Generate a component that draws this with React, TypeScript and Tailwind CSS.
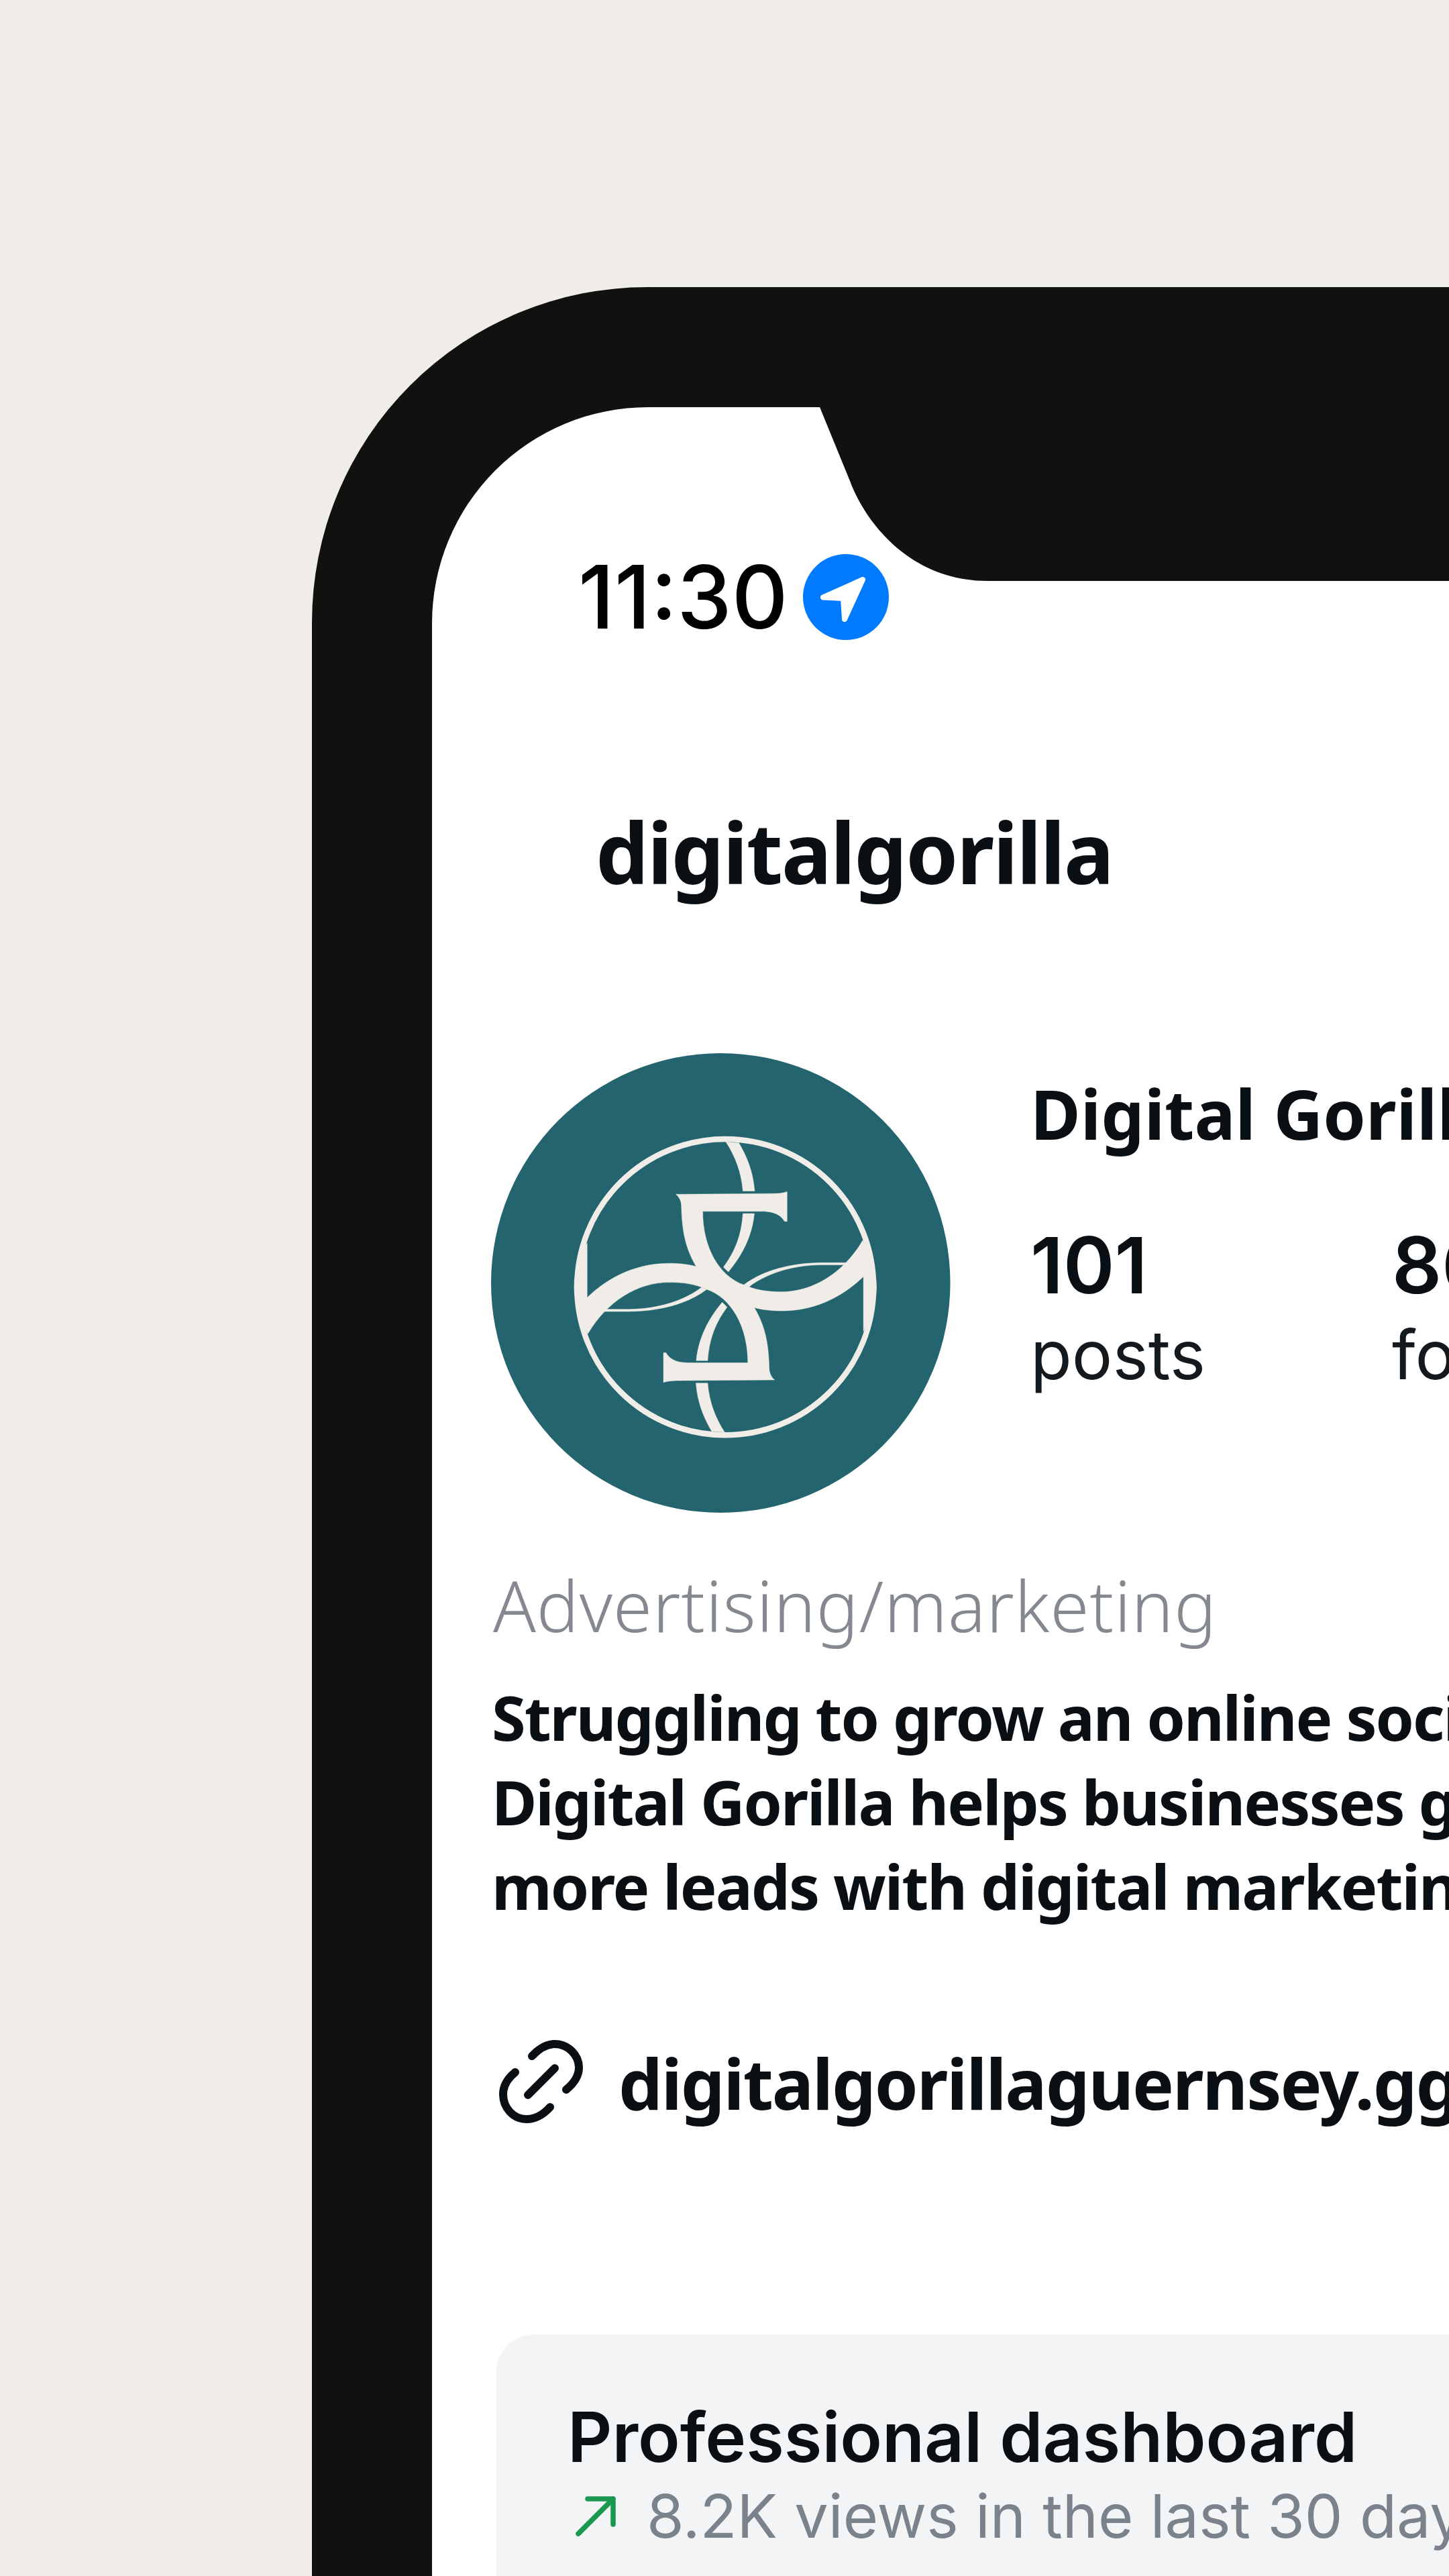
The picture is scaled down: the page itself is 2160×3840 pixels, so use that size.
const plex = "font-['Noto_Sans',sans-serif]";
const inter = "font-['Inter',sans-serif]";

const cream = "#f0ede8";

// one half of the monogram, drawn again turned 180deg round the ring centre
const logoPaths = [
  "M668 510 L980 508 Q1010 508 1028 502 L1028 596 L1020 596 C1005 570 975 564 945 564 L755 564 C755 680 810 770 888 796 C925 812 960 818 1010 818 C1110 818 1210 760 1273 655 C1300 715 1317 760 1317 803 C1317 850 1300 900 1275 942 L1275 770 C1200 840 1110 878 1010 878 C975 878 950 875 922 868 L735 740 C705 690 688 640 686 550 C686 530 678 518 668 510 Z",
  "M888 796 C950 750 1040 727 1140 726 L1228 726 L1222 733 L1140 733 C1050 733 960 760 905 802 Z",
  "M830 345 C860 390 880 440 885 500 L923 500 C918 440 900 395 872 348 Z",
  "M885 571 L922 571 C915 640 885 700 838 755 L822 740 C860 690 880 640 885 571 Z",
];

function Avatar() {
  return (
    <svg viewBox="70 65 1487 1450" preserveAspectRatio="none" className="h-[685px] w-[685px] shrink-0">
      <ellipse cx="813" cy="790" rx="743" ry="725" fill="#23646e" />
      <ellipse cx="828" cy="803" rx="480" ry="467" fill="none" stroke={cream} strokeWidth="18" />
      <g fill={cream} stroke={cream} strokeWidth="1">
        {logoPaths.map((d) => (
          <path key={d} d={d} />
        ))}
        {logoPaths.map((d) => (
          <path key={d} d={d} transform="rotate(180 828 803)" />
        ))}
      </g>
    </svg>
  );
}

function LocationDot() {
  return (
    <svg viewBox="0 0 128 128" className="h-[128px] w-[128px] shrink-0">
      <circle cx="64" cy="64" r="64" fill="#007aff" />
      <path
        d="M89 38 L30 64.5 L60 66 L62 97 Z"
        fill="#fff"
        stroke="#fff"
        strokeWidth="8"
        strokeLinejoin="round"
      />
    </svg>
  );
}

function LinkIcon() {
  return (
    <svg viewBox="0 0 145 145" fill="none" stroke="#0a0f14" strokeWidth="12" strokeLinecap="round" className="h-[145px] w-[145px] shrink-0">
      <path d="M58 33 C68 22 78 16 90 15 C112 14 128 32 128 50 C128 63 120 74 109 83" />
      <path d="M85 109 C75 120 63 127 50 127 C30 127 15 110 15 90 C15 77 22 66 33 57" />
      <path d="M52 91 L92 51" />
    </svg>
  );
}

function Stat({ value, label }: { value: string; label: string }) {
  return (
    <div className="flex w-[539px] shrink-0 flex-col">
      <span className={`${inter} text-[116px] leading-[124px] font-semibold text-[#0a0f14]`}>{value}</span>
      <span className={`${inter} mt-[15px] text-[101px] leading-[112px] text-[#14191e]`}>{label}</span>
    </div>
  );
}

export default function App() {
  return (
    <div className="h-[3840px] w-[2160px] overflow-hidden bg-[#f0ede8] pt-[428px] pl-[465px]">
      <div className="h-[3412px] w-[2400px] rounded-tl-[500px] bg-[#11110f] pt-[179px] pl-[179px]">
        <div className="relative h-[3233px] w-[2221px] overflow-hidden rounded-tl-[322px] bg-white">
          {/* notch */}
          <svg viewBox="0 0 1643 259" className="absolute top-0 left-[578px] h-[259px] w-[1643px]">
            <path d="M0 0 L45 110 C65 165 130 259 250 259 L1643 259 L1643 0 Z" fill="#11110f" />
          </svg>

          <div className="flex h-[566px] items-center pl-[218px]">
            <span className={`${inter} w-[335px] text-[130px] leading-none font-[550] text-black`}>11:30</span>
            <LocationDot />
          </div>

          <h1 className={`${plex} mt-[17px] ml-[244px] text-[125px] leading-[160px] font-bold tracking-[-2px] text-[#0a0f14]`}>
            digitalgorilla
          </h1>

          <div className="mt-[220px] flex items-start pl-[88px]">
            <Avatar />
            <div className="ml-[119px] flex flex-col pt-[25px]">
              <span className={`${plex} text-[102px] leading-[130px] font-bold whitespace-nowrap text-[#0a0f14]`}>
                Digital Gorilla
              </span>
              <div className="mt-[99px] flex">
                <Stat value="101" label="posts" />
                <Stat value="860" label="followers" />
              </div>
            </div>
          </div>

          <p className={`${plex} mt-[73px] ml-[91px] text-[105px] leading-[130px] font-light tracking-[1px] text-[#83898f]`}>
            Advertising/marketing
          </p>
          <div className={`${plex} mt-[39px] ml-[89px] text-[92px] leading-[126px] font-bold tracking-[-2px] whitespace-nowrap text-[#0a0f14]`}>
            <p>Struggling to grow an online social</p>
            <p>Digital Gorilla helps businesses grow</p>
            <p>more leads with digital marketing</p>
          </div>

          <div className="mt-[157px] ml-[91px] flex items-center">
            <LinkIcon />
            <span className={`${plex} ml-[42px] text-[104px] leading-[140px] font-bold tracking-[-2px] whitespace-nowrap text-[#0a0f14]`}>
              digitalgorillaguernsey.gg
            </span>
          </div>

          <div className="mt-[303px] ml-[96px] h-[500px] rounded-tl-[56px] bg-[#f3f4f6] pt-[93px] pl-[106px]">
            <div className={`${inter} text-[103px] leading-[120px] font-semibold whitespace-nowrap text-[#0a0f14]`}>
              Professional dashboard
            </div>
            <div className="mt-[3px] flex items-center">
              <svg viewBox="18 19 60 60" fill="none" stroke="#1a9850" strokeWidth="7.5" strokeLinecap="round" strokeLinejoin="round" className="ml-[12px] h-[60px] w-[60px] shrink-0">
                <path d="M22 75 L74 23 M36 23 L74 23 L74 61" />
              </svg>
              <span className={`${inter} ml-[46px] text-[90px] leading-[110px] whitespace-nowrap text-[#7a828c]`}>
                8.2K views in the last 30 days
              </span>
            </div>
          </div>
        </div>
      </div>
    </div>
  );
}
